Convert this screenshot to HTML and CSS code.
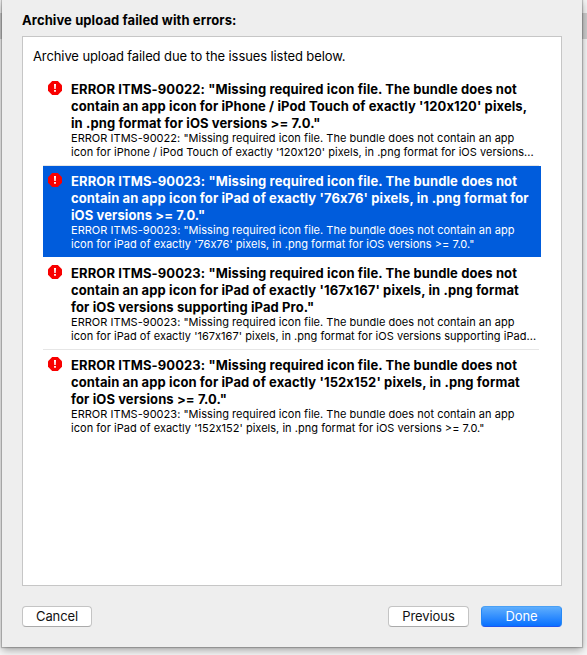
FILE: index.html
```
<!DOCTYPE html>
<html lang="en">
<head>
<meta charset="utf-8">
<title>Archive upload</title>
<link rel="stylesheet" href="styles.css">
</head>
<body>
<svg width="0" height="0" class="defs"><symbol id="stop" viewBox="0 0 14 14"><path d="M4.2 0h5.6L14 4.2v5.6L9.8 14H4.2L0 9.8V4.2z" fill="#f80000"/><path d="M6 3h2l-.3 5H6.3zM6.1 9h1.8v1.8H6.1z" fill="#fff"/></symbol></svg>
<main class="sheet">
  <h1 class="heading">Archive upload failed with errors:</h1>
  <section class="panel">
    <p class="intro">Archive upload failed due to the issues listed below.</p>
    <ul class="issues">
      <li class="issue">
        <svg class="icon"><use href="#stop"/></svg>
        <div><h2 class="title">ERROR ITMS-90022: "Missing required icon file. The bundle does not<br>contain an app icon for iPhone / iPod Touch of exactly '120x120' pixels,<br>in .png format for iOS versions &gt;= 7.0."</h2>
        <p class="detail">ERROR ITMS-90022: "Missing required icon file. The bundle does not contain an app<br>icon for iPhone / iPod Touch of exactly '120x120' pixels, in .png format for iOS versions...</p></div>
      </li>
      <li class="issue selected">
        <svg class="icon"><use href="#stop"/></svg>
        <div><h2 class="title">ERROR ITMS-90023: "Missing required icon file. The bundle does not<br>contain an app icon for iPad of exactly '76x76' pixels, in .png format for<br>iOS versions &gt;= 7.0."</h2>
        <p class="detail">ERROR ITMS-90023: "Missing required icon file. The bundle does not contain an app<br>icon for iPad of exactly '76x76' pixels, in .png format for iOS versions &gt;= 7.0."</p></div>
      </li>
      <li class="issue">
        <svg class="icon"><use href="#stop"/></svg>
        <div><h2 class="title">ERROR ITMS-90023: "Missing required icon file. The bundle does not<br>contain an app icon for iPad of exactly '167x167' pixels, in .png format<br>for iOS versions supporting iPad Pro."</h2>
        <p class="detail">ERROR ITMS-90023: "Missing required icon file. The bundle does not contain an app<br>icon for iPad of exactly '167x167' pixels, in .png format for iOS versions supporting iPad...</p></div>
      </li>
      <li class="issue">
        <svg class="icon"><use href="#stop"/></svg>
        <div><h2 class="title">ERROR ITMS-90023: "Missing required icon file. The bundle does not<br>contain an app icon for iPad of exactly '152x152' pixels, in .png format<br>for iOS versions &gt;= 7.0."</h2>
        <p class="detail">ERROR ITMS-90023: "Missing required icon file. The bundle does not contain an app<br>icon for iPad of exactly '152x152' pixels, in .png format for iOS versions &gt;= 7.0."</p></div>
      </li>
    </ul>
  </section>
  <footer class="actions">
    <button class="button cancel">Cancel</button>
    <button class="button previous">Previous</button>
    <button class="button done">Done</button>
  </footer>
</main>
</body>
</html>
```
FILE: styles.css
```
* { box-sizing: border-box; }
body {
  margin: 0;
  height: 655px;
  padding: 0 5px 0 2px;
  overflow: hidden;
  font: 13px/17px Inter, "Liberation Sans", sans-serif;
  font-feature-settings: "calt" 0;
  color: #000;
  background: linear-gradient(#f4f4f4 13px, #cdcdcd 13px, #cdcdcd 39px, #f6f6f6 39px);
}
.defs { display: block; width: 0; height: 0; }
h1, h2, p, ul { margin: 0; padding: 0; font-size: inherit; }
.sheet {
  height: 647px;
  padding: 12px 20px 0;
  background: #eee;
  box-shadow: 0 0 1px 1px rgba(0,0,0,.2), 0 3px 8px rgba(0,0,0,.35);
}
.heading { font-weight: 700; letter-spacing: .1px; white-space: nowrap; }
.panel {
  height: 550px;
  margin-top: 7px;
  padding: 11px 20px 0 10px;
  border: 1px solid #c6c6c6;
  background: #fff;
}
.intro { white-space: nowrap; letter-spacing: -.1px; }
.issues { margin: 9px 0 0 10px; list-style: none; width: 498px; }
.issue {
  display: flex;
  height: 92px;
  padding: 7px 0 0 5px;
  gap: 9px;
  background: linear-gradient(#e6e6e6, #e6e6e6) 0 91px / 496px 1px no-repeat;
}
.issue:last-child { background: none; }
.issue.selected { color: #fff; background: linear-gradient(#005cdc, #005cdc) 0 0 / 100% 91px no-repeat; }
.icon { flex: none; width: 14px; height: 14px; }
.title { font-weight: 700; white-space: nowrap; letter-spacing: .1px; }
.detail { margin-top: -1px; font-size: 11px; line-height: 14px; white-space: nowrap; letter-spacing: .03px; }
.actions { display: flex; margin-top: 20px; }
.button {
  height: 21px;
  padding: 0;
  border: 1px solid #c4c4c4;
  border-bottom-color: #aaa;
  border-radius: 4px;
  background: #fff;
  color: #111;
  font: inherit;
  letter-spacing: -.1px;
}
.cancel { width: 70px; }
.previous { width: 81px; margin-left: auto; }
.done {
  width: 81px;
  margin-left: 12px;
  color: #fff;
  border-color: #4aa0f5 #2588f5 #1f55ef;
  background: linear-gradient(#5eaefd, #0870ff);
}
```
